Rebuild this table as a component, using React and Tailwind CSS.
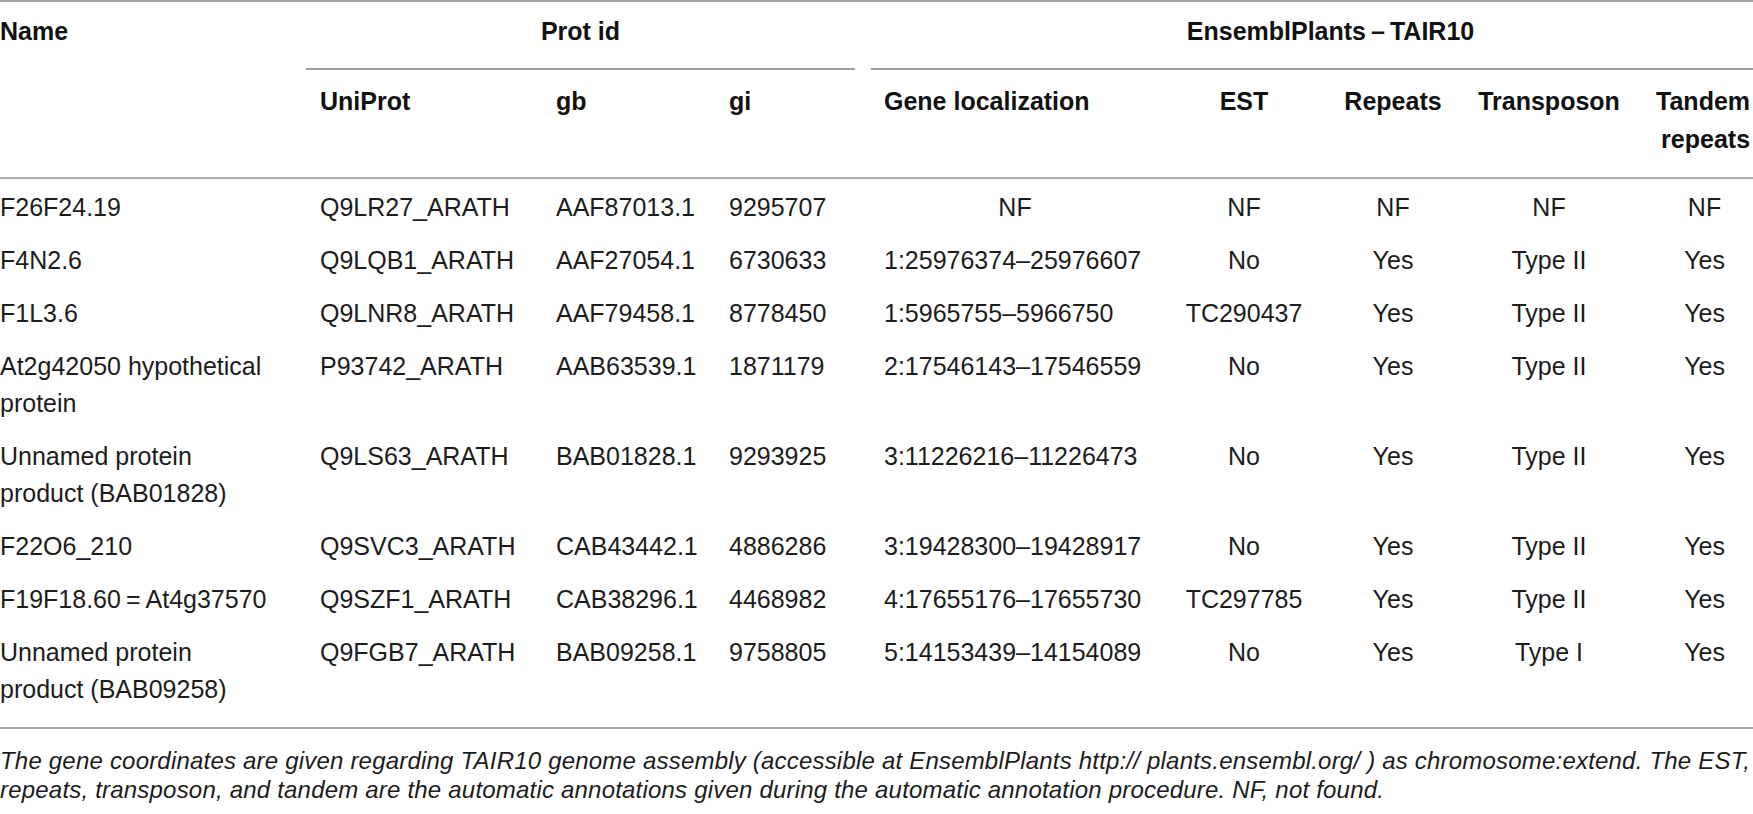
const rows = [
  { name: ['F26F24.19'], uni: 'Q9LR27_ARATH', gb: 'AAF87013.1', gi: '9295707', loc: 'NF', est: 'NF', rep: 'NF', tr: 'NF', tan: 'NF' },
  { name: ['F4N2.6'], uni: 'Q9LQB1_ARATH', gb: 'AAF27054.1', gi: '6730633', loc: '1:25976374–25976607', est: 'No', rep: 'Yes', tr: 'Type II', tan: 'Yes' },
  { name: ['F1L3.6'], uni: 'Q9LNR8_ARATH', gb: 'AAF79458.1', gi: '8778450', loc: '1:5965755–5966750', est: 'TC290437', rep: 'Yes', tr: 'Type II', tan: 'Yes' },
  { name: ['At2g42050 hypothetical', 'protein'], uni: 'P93742_ARATH', gb: 'AAB63539.1', gi: '1871179', loc: '2:17546143–17546559', est: 'No', rep: 'Yes', tr: 'Type II', tan: 'Yes' },
  { name: ['Unnamed protein', 'product (BAB01828)'], uni: 'Q9LS63_ARATH', gb: 'BAB01828.1', gi: '9293925', loc: '3:11226216–11226473', est: 'No', rep: 'Yes', tr: 'Type II', tan: 'Yes' },
  { name: ['F22O6_210'], uni: 'Q9SVC3_ARATH', gb: 'CAB43442.1', gi: '4886286', loc: '3:19428300–19428917', est: 'No', rep: 'Yes', tr: 'Type II', tan: 'Yes' },
  { name: ['F19F18.60\u2009=\u2009At4g37570'], uni: 'Q9SZF1_ARATH', gb: 'CAB38296.1', gi: '4468982', loc: '4:17655176–17655730', est: 'TC297785', rep: 'Yes', tr: 'Type II', tan: 'Yes' },
  { name: ['Unnamed protein', 'product (BAB09258)'], uni: 'Q9FGB7_ARATH', gb: 'BAB09258.1', gi: '9758805', loc: '5:14153439–14154089', est: 'No', rep: 'Yes', tr: 'Type I', tan: 'Yes' },
];

function App() {
  return (
    <div className="w-[1753px] bg-white text-[#1c1c1c] font-['Liberation_Sans',Arial,sans-serif]">
      <div className="h-[2px] bg-[#a3a3a3]" />
      <table className="w-full table-fixed border-collapse text-[25px] leading-[37px]">
        <colgroup>
          <col className="w-[306px]" />
          <col className="w-[236px]" />
          <col className="w-[173px]" />
          <col className="w-[155px]" />
          <col className="w-[296px]" />
          <col className="w-[154px]" />
          <col className="w-[144px]" />
          <col className="w-[168px]" />
          <col className="w-[121px]" />
        </colgroup>
        <thead className="font-bold text-[#111]">
          <tr>
            <th rowSpan={2} className="align-top text-left pt-[11px] p-0 border-b-2 border-[#ababab]">Name</th>
            <th colSpan={3} className="align-top p-0 pt-[11px]">
              <div className="text-center pr-[15px] pb-[18px]">Prot id</div>
              <div className="h-[2px] bg-[#9e9e9e] mr-[15px]" />
            </th>
            <th colSpan={5} className="align-top p-0 pt-[11px]">
              <div className="text-center pl-[38px] pb-[18px] whitespace-nowrap">EnsemblPlants{'\u2009–\u2009'}TAIR10</div>
              <div className="h-[2px] bg-[#9e9e9e] ml-[1px]" />
            </th>
          </tr>
          <tr className="leading-[38px]">
            <th className="align-top text-left pl-[14px] pt-[12px] pb-[19px] border-b-2 border-[#ababab]">UniProt</th>
            <th className="align-top text-left pl-[14px] pt-[12px] pb-[19px] border-b-2 border-[#ababab]">gb</th>
            <th className="align-top text-left pl-[14px] pt-[12px] pb-[19px] border-b-2 border-[#ababab]">gi</th>
            <th className="align-top text-left pl-[14px] pt-[12px] pb-[19px] border-b-2 border-[#ababab] whitespace-nowrap">Gene localization</th>
            <th className="align-top text-center pl-[14px] pr-[12px] pt-[12px] pb-[19px] border-b-2 border-[#ababab]">EST</th>
            <th className="align-top text-center pl-[14px] pr-[12px] pt-[12px] pb-[19px] border-b-2 border-[#ababab]">Repeats</th>
            <th className="align-top text-center pl-[14px] pr-[12px] pt-[12px] pb-[19px] border-b-2 border-[#ababab]">Transposon</th>
            <th className="align-top text-right pl-[4px] pr-[3px] pt-[12px] pb-[19px] border-b-2 border-[#ababab] whitespace-nowrap">Tandem<br />repeats</th>
          </tr>
        </thead>
        <tbody>
          {rows.map((r, i) => {
            const pad = i === 0 ? 'pt-[10px] pb-[8px]' : i === rows.length - 1 ? 'pt-[8px] pb-[19px]' : 'py-[8px]';
            return (
              <tr key={i} className="align-top">
                <td className={`${pad} whitespace-nowrap`}>
                  {r.name.map((n, j) => (
                    <div key={j}>{n}</div>
                  ))}
                </td>
                <td className={`${pad} pl-[14px]`}>{r.uni}</td>
                <td className={`${pad} pl-[14px]`}>{r.gb}</td>
                <td className={`${pad} pl-[14px]`}>{r.gi}</td>
                <td className={`${pad} pl-[14px] whitespace-nowrap ${r.loc === 'NF' ? 'text-center pr-[20px]' : ''}`}>{r.loc}</td>
                <td className={`${pad} pl-[14px] pr-[12px] text-center`}>{r.est}</td>
                <td className={`${pad} pl-[14px] pr-[12px] text-center`}>{r.rep}</td>
                <td className={`${pad} pl-[14px] pr-[12px] text-center`}>{r.tr}</td>
                <td className={`${pad} pl-[24px] text-center`}>{r.tan}</td>
              </tr>
            );
          })}
        </tbody>
      </table>
      <div className="h-[2px] bg-[#a3a3a3]" />
      <p className="pt-[17px] text-[24px] leading-[29px] tracking-[0.2px] italic text-[#1c1c1c] whitespace-nowrap">
        The gene coordinates are given regarding TAIR10 genome assembly (accessible at EnsemblPlants http:// plants.ensembl.org/ ) as chromosome:extend. The EST,
        <br />
        repeats, transposon, and tandem are the automatic annotations given during the automatic annotation procedure. NF, not found.
      </p>
    </div>
  );
}

export default App;
